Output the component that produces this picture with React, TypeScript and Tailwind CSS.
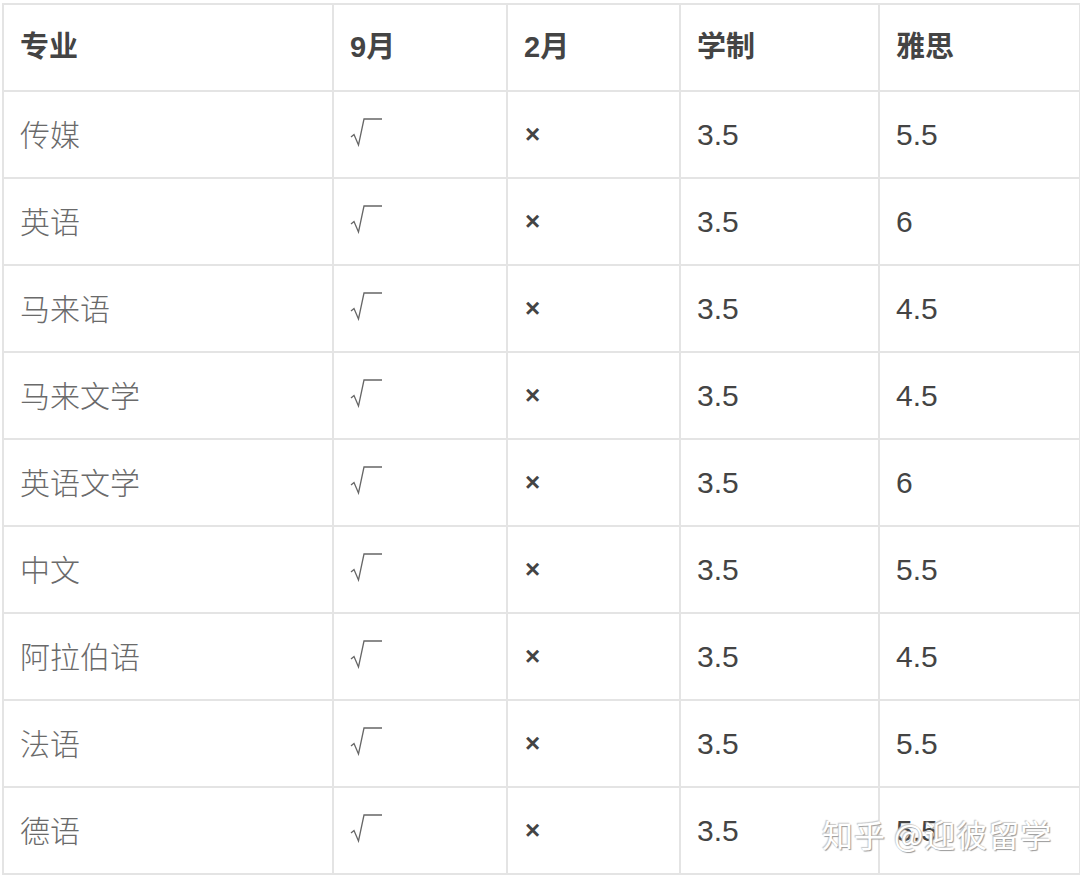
import React from 'react'

const rows: [string, string, string][] = [
  ['传媒', '3.5', '5.5'],
  ['英语', '3.5', '6'],
  ['马来语', '3.5', '4.5'],
  ['马来文学', '3.5', '4.5'],
  ['英语文学', '3.5', '6'],
  ['中文', '3.5', '5.5'],
  ['阿拉伯语', '3.5', '4.5'],
  ['法语', '3.5', '5.5'],
  ['德语', '3.5', '5.5'],
]

const font = { fontFamily: '"Liberation Sans", "Noto Sans CJK SC", sans-serif' }

function Check() {
  return (
    <svg width="34" height="30" viewBox="0 0 34 30" className="block">
      <path d="M1 20 L4 17.5 L8.5 28 L14 2 L32 2" fill="none" stroke="#666" strokeWidth="1.3" />
    </svg>
  )
}

function Cell({ children, className = '' }: { children: React.ReactNode; className?: string }) {
  return (
    <td className={`border-2 border-[#e4e4e4] h-[87px] pl-[16px] align-middle ${className}`}>{children}</td>
  )
}

export default function App() {
  return (
    <div className="w-[1080px] h-[879px] bg-white relative overflow-hidden pt-[3px] pl-[2px]" style={font}>
      <table className="border-collapse table-fixed w-[1077px]">
        <colgroup>
          <col className="w-[330px]" />
          <col className="w-[174px]" />
          <col className="w-[173px]" />
          <col className="w-[199px]" />
          <col className="w-[201px]" />
        </colgroup>
        <thead>
          <tr>
            {['专业', '9月', '2月', '学制', '雅思'].map((h) => (
              <Cell key={h} className="text-[29px] font-bold text-[#444]">
                {h}
              </Cell>
            ))}
          </tr>
        </thead>
        <tbody>
          {rows.map(([name, years, ielts]) => (
            <tr key={name}>
              <Cell className="text-[30px] text-[#6a6a6a] pl-[15px]">
                <span style={{ fontFamily: '"Noto Sans CJK SC", sans-serif' }} className="font-light">
                  {name}
                </span>
              </Cell>
              <Cell className="pl-[13px] pb-[6px]">
                <Check />
              </Cell>
              <Cell className="text-[26px] font-bold text-[#444] pl-[17px]">×</Cell>
              <Cell className="text-[30px] text-[#444]">{years}</Cell>
              <Cell className="text-[30px] text-[#444]">{ielts}</Cell>
            </tr>
          ))}
        </tbody>
      </table>
      <div
        className="absolute left-[822px] top-[811px] text-[31px] text-white tracking-[1px]"
        style={{
          fontFamily: '"Noto Sans CJK SC", sans-serif',
          textShadow: '1px 1px 1px #9a9a9a, -1px -1px 1px #c8c8c8',
        }}
      >
        知乎 @迎彼留学
      </div>
    </div>
  )
}
